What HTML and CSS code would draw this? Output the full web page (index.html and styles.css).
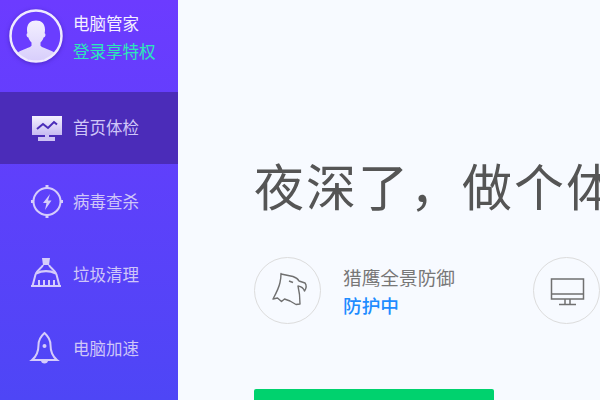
FILE: index.html
```html
<!DOCTYPE html>
<html lang="zh-CN">
  <head>
    <meta charset="UTF-8" />
    <link rel="stylesheet" href="styles.css">
    <title>电脑管家</title>
  </head>
  <body>
  <div class="app">
    <aside class="sidebar">
      <div class="profile">
        <div class="avatar">
          <svg viewBox="0 0 54 54" width="54" height="54">
            <defs>
              <linearGradient id="bust" x1="0" y1="0" x2="0" y2="1">
                <stop offset="0" stop-color="#f3efff"/>
                <stop offset="1" stop-color="#d6ccfb"/>
              </linearGradient>
              <clipPath id="disc"><circle cx="27" cy="27" r="25"/></clipPath>
            </defs>
            <circle cx="27" cy="27" r="25.500" fill="#6a3dff"/>
            <path clip-path="url(#disc)" fill="url(#bust)" d="M27 11.500c-5.300 0-9 3.200-9 9 0 1.400.1 2.700.4 3.800-.9.200-1 1.300-.7 2.400.3 1.100.9 1.700 1.700 1.700.6 2 1.800 3.800 3.100 5v3.300c-1.600 2-8.200 3.400-12.200 5.800-2.200 1.300-3.300 3-3.800 5.500v6.500h41v-6.500c-.5-2.500-1.600-4.200-3.800-5.500-4-2.400-10.600-3.800-12.200-5.800v-3.300c1.300-1.200 2.500-3 3.100-5 .8 0 1.400-.6 1.700-1.700.3-1.100.2-2.200-.7-2.400.3-1.100.4-2.400.4-3.800 0-5.800-3.700-9-9-9z"/>
            <circle cx="27" cy="27" r="25.500" fill="none" stroke="#efeaff" stroke-width="2.500"/>
          </svg>
        </div>
        <div class="profile-text">
          <div class="profile-name">电脑管家</div>
          <div class="profile-login">登录享特权</div>
        </div>
      </div>
      <nav class="nav">
        <a class="nav-item active">
          <svg class="nav-icon" viewBox="0 -1 32 32" width="32" height="32">
            <defs>
              <linearGradient id="screen" x1="0" y1="0" x2="0" y2="1">
                <stop offset="0" stop-color="#f4f1ff"/>
                <stop offset="1" stop-color="#c7baf2"/>
              </linearGradient>
            </defs>
            <path fill="url(#screen)" d="M1 4h30v19H1z"/>
            <path fill="#cdc1f4" d="M14 23h4v2h-4zM7 25h17v4H7z"/>
            <path fill="none" stroke="#4a2cb8" stroke-width="2" d="M6 17l6-5 5 4 6-6 3 2.500"/>
          </svg>
          <span>首页体检</span>
        </a>
        <a class="nav-item">
          <svg class="nav-icon" viewBox="0 0 32 32" width="32" height="32">
            <circle cx="16" cy="16.500" r="13.500" fill="none" stroke="#d5ccfb" stroke-width="2"/>
            <path fill="#d5ccfb" d="M14.500 0h3v3h-3zM14.500 30h3v3h-3zM0 15h3v3H0zM29 15h3v3h-3z"/>
            <path fill="#d5ccfb" d="M19 9l-7 9h3.500L14 25l6.500-9.500H17z"/>
          </svg>
          <span>病毒查杀</span>
        </a>
        <a class="nav-item">
          <svg class="nav-icon" viewBox="0 0 32 32" width="32" height="32">
            <path fill="#d5ccfb" d="M11 0h8l-1 7h-6z"/>
            <path fill="none" stroke="#d5ccfb" stroke-width="2" d="M12 7c-1 3-5.500 4.500-7.500 9.500L1.500 28M18 7c1 3 5.500 4.500 7.500 9.500l3 11.500"/>
            <path fill="none" stroke="#d5ccfb" stroke-width="2.500" d="M5 15.500c6-3 14-3 20 0"/>
            <path fill="none" stroke="#d5ccfb" stroke-width="2" d="M0 28h30M8 28v-6M13 28v-6M18 28v-6M23 28v-6"/>
          </svg>
          <span>垃圾清理</span>
        </a>
        <a class="nav-item">
          <svg class="nav-icon" viewBox="0 0 32 32" width="32" height="32">
            <path fill="none" stroke="#d5ccfb" stroke-width="2" d="M13.500 1C9 5 7.500 9 7.500 13c0 6-1.500 11-6.500 15h25c-5-4-6.500-9-6.500-15 0-4-1.500-8-6-12z"/>
            <circle cx="13.500" cy="14" r="2" fill="#d5ccfb"/>
            <path fill="#d5ccfb" d="M10 28.500h7c0 1.800-1.500 3-3.500 3s-3.500-1.200-3.500-3z"/>
          </svg>
          <span>电脑加速</span>
        </a>
      </nav>
    </aside>
    <main class="main">
      <h1 class="headline">夜深了，做个体</h1>
      <div class="features">
        <div class="feature">
          <div class="feature-circle">
            <svg viewBox="0 0 50 50" width="50" height="50">
              <path fill="none" stroke="#707070" stroke-width="1.400" stroke-linejoin="round" d="M18 8l12 2.500c3 1 5 2.500 6 4.500l6 2c1.500 2 1.500 5-.5 8-1-3-3.500-4.500-6.500-5 1.500 6 2 12 2 18l-4 .5-6-3.500-5.500-2-3 2.500-4-3.500-4.500 1c3-5.500 6-11.500 7-16.500 1-4 1-7 1-9z"/>
              <path fill="none" stroke="#707070" stroke-width="1.400" d="M26 15l4 1.500"/>
            </svg>
          </div>
          <div class="feature-text">
            <div class="feature-name">猎鹰全景防御</div>
            <div class="feature-status">防护中</div>
          </div>
        </div>
        <div class="feature">
          <div class="feature-circle">
            <svg viewBox="0 0 50 50" width="50" height="50">
              <path fill="none" stroke="#707070" stroke-width="1.500" d="M9.500 13h32v20h-32zM9.500 28h32M23 33v5.500M28 33v5.500M17 38.500h17"/>
            </svg>
          </div>
        </div>
      </div>
      <div class="scan-button"></div>
    </main>
  </div>
</body>
</html>
```

FILE: styles.css
```css
* {
  box-sizing: border-box;
}
html, body {
  margin: 0;
  padding: 0;
  height: 100%;
  overflow: hidden;
}
body {
  font-family: "Noto Sans CJK SC", "Liberation Sans", sans-serif;
}
.app {
  display: flex;
  width: 600px;
  height: 400px;
  background-color: #f7faff;
}

/* Sidebar */
.sidebar {
  flex: 0 0 178px;
  background: linear-gradient(180deg, #6c3bff 0%, #4e46f6 100%);
}
.profile {
  height: 92px;
  padding: 9px 0 0 9px;
  display: flex;
}
.avatar {
  width: 54px;
  height: 54px;
  filter: drop-shadow(0 1px 2px rgba(50, 20, 150, 0.5));
}
.avatar svg {
  display: block;
}
.profile-text {
  margin-left: 10px;
  padding-top: 3px;
}
.profile-name {
  color: #f4f0ff;
  font-size: 16.5px;
  line-height: 22px;
}
.profile-login {
  color: #2ce8b8;
  font-size: 16.5px;
  line-height: 22px;
  margin-top: 6px;
}
.nav-item {
  height: 73.5px;
  padding-left: 31px;
  display: flex;
  align-items: center;
  color: #cfc6f8;
  font-size: 16.5px;
  line-height: 22px;
}
.nav-item.active {
  height: 72px;
  padding-bottom: 2px;
  background-color: #4b2cb9;
}
.nav-icon {
  flex: none;
  margin-right: 10px;
  overflow: visible;
}

/* Main panel */
.main {
  flex: 1;
  min-width: 0;
  padding: 148px 0 0 76px;
  overflow: hidden;
}
.headline {
  margin: 0;
  color: #555;
  font-size: 50px;
  font-weight: 400;
  letter-spacing: 2px;
  line-height: 72px;
  white-space: nowrap;
}
.features {
  display: flex;
  margin-top: 37px;
}
.feature {
  flex: 0 0 279px;
  display: flex;
  align-items: center;
}
.feature-circle {
  flex: none;
  width: 67px;
  height: 67px;
  border: 1px solid #dcdcdc;
  border-radius: 50%;
  display: flex;
  align-items: center;
  justify-content: center;
}
.feature-text {
  margin-left: 22px;
}
.feature-name {
  color: #777;
  font-size: 18.67px;
  line-height: 24px;
}
.feature-status {
  color: #1e8cff;
  font-size: 18.67px;
  font-weight: 500;
  line-height: 24px;
  margin-top: 4px;
}
.scan-button {
  width: 240px;
  height: 48px;
  margin-top: 65px;
  background-color: #00d26e;
  border-radius: 2px;
}
```
